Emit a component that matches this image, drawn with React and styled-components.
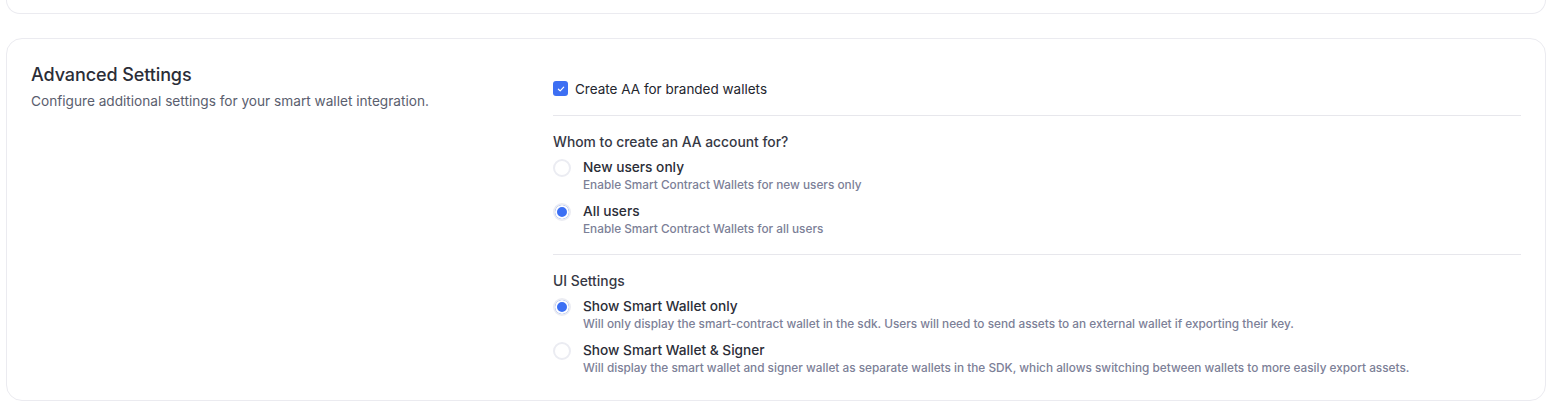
import styled, { createGlobalStyle } from "styled-components";

const GlobalStyle = createGlobalStyle`
  body {
    margin: 0;
    background: #ffffff;
    font-family: "Inter", "Noto Sans", sans-serif;
    -webkit-font-smoothing: antialiased;
  }
`;

const whomOptions = [
  {
    id: "new",
    label: "New users only",
    description: "Enable Smart Contract Wallets for new users only",
    checked: false,
  },
  {
    id: "all",
    label: "All users",
    description: "Enable Smart Contract Wallets for all users",
    checked: true,
  },
];

const uiOptions = [
  {
    id: "smart",
    label: "Show Smart Wallet only",
    description:
      "Will only display the smart-contract wallet in the sdk. Users will need to send assets to an external wallet if exporting their key.",
    checked: true,
  },
  {
    id: "signer",
    label: "Show Smart Wallet & Signer",
    description:
      "Will display the smart wallet and signer wallet as separate wallets in the SDK, which allows switching between wallets to more easily export assets.",
    checked: false,
  },
];

const RadioGroup = ({ title, options }) => (
  <Group>
    <GroupTitle>{title}</GroupTitle>
    <RadioList>
      {options.map((o) => (
        <RadioOption key={o.id}>
          <Radio $checked={o.checked} />
          <OptionText>
            <OptionLabel>{o.label}</OptionLabel>
            <OptionDesc>{o.description}</OptionDesc>
          </OptionText>
        </RadioOption>
      ))}
    </RadioList>
  </Group>
);

const App = () => {
  return (
    <Page>
      <GlobalStyle />
      <TopCard />
      <Card>
        <Intro>
          <Title>Advanced Settings</Title>
          <Subtitle>Configure additional settings for your smart wallet integration.</Subtitle>
        </Intro>

        <Options>
          <CheckRow>
            <CheckBox>
              <svg width="10" height="10" viewBox="0 0 10 10" fill="none">
                <path
                  d="M2.4 5.2l1.8 1.7 3.5-3.7"
                  stroke="#fff"
                  strokeWidth="1.2"
                  strokeLinecap="round"
                  strokeLinejoin="round"
                />
              </svg>
            </CheckBox>
            <CheckLabel>Create AA for branded wallets</CheckLabel>
          </CheckRow>

          <Divider />
          <RadioGroup title="Whom to create an AA account for?" options={whomOptions} />
          <Divider />
          <RadioGroup title="UI Settings" options={uiOptions} />
        </Options>
      </Card>
    </Page>
  );
};

export default App;

// Styled Components
const Page = styled.div`
  padding: 0 17px 0 6px;
  display: flex;
  flex-direction: column;
  gap: 24px;
`;

const TopCard = styled.div`
  height: 13px;
  border: 1px solid #ebebf0;
  border-top: none;
  border-radius: 0 0 16px 16px;
`;

const Card = styled.section`
  display: flex;
  border: 1px solid #ebebf0;
  border-radius: 16px;
  padding: 24px 24px 20px;
  min-height: 317px;
`;

const Intro = styled.div`
  width: 522px;
  flex-shrink: 0;
  display: flex;
  flex-direction: column;
  gap: 4px;
`;

const Title = styled.h2`
  margin: 0;
  font-size: 18px;
  font-weight: 500;
  line-height: 24px;
  color: #2b2d37;
  letter-spacing: -0.1px;
`;

const Subtitle = styled.p`
  margin: 0;
  font-size: 13.65px;
  line-height: 20px;
  color: #5a5e6e;
`;

const Options = styled.div`
  flex: 1;
  padding-top: 16px;
  display: flex;
  flex-direction: column;
`;

const CheckRow = styled.label`
  display: flex;
  align-items: center;
  gap: 7px;
  height: 19px;
`;

const CheckBox = styled.span`
  width: 15px;
  height: 15px;
  border-radius: 3px;
  background: #3d6ff3;
  display: flex;
  align-items: center;
  justify-content: center;
`;

const CheckLabel = styled.span`
  font-size: 13.5px;
  color: #23252e;
`;

const Divider = styled.hr`
  border: none;
  height: 1px;
  background: #e7e7ec;
  margin: 17px 0 16px;
`;

const Group = styled.div`
  display: flex;
  flex-direction: column;
  gap: 5px;
`;

const GroupTitle = styled.div`
  font-size: 13.85px;
  font-weight: 500;
  line-height: 20px;
  color: #363844;
`;

const RadioList = styled.div`
  display: flex;
  flex-direction: column;
  gap: 8px;
`;

const RadioOption = styled.label`
  display: flex;
  align-items: flex-start;
  gap: 12px;
`;

const Radio = styled.span`
  box-sizing: border-box;
  width: 18px;
  height: 18px;
  margin-top: 2px;
  border-radius: 50%;
  border: 2px solid #ebecf2;
  background: ${(p) => (p.$checked ? "#3b6ff4" : "#fff")};
  box-shadow: ${(p) => (p.$checked ? "inset 0 0 0 2px #fff" : "none")};
  flex-shrink: 0;
`;

const OptionText = styled.div`
  display: flex;
  flex-direction: column;
`;

const OptionLabel = styled.span`
  font-size: 13.7px;
  font-weight: 500;
  line-height: 20px;
  color: #2b2d37;
`;

const OptionDesc = styled.span`
  font-size: 11.8px;
  font-weight: 500;
  line-height: 16px;
  color: #7c8097;
`;
